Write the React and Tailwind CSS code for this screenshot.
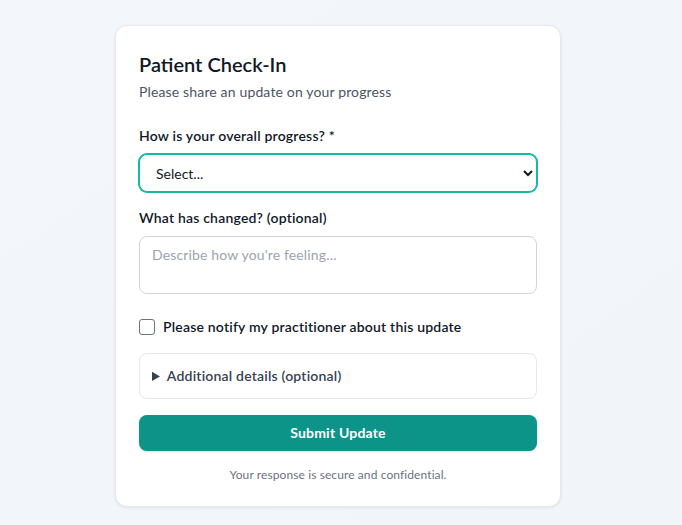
import React from "react";

export default function App() {
  return (
    <div
      className="min-h-[525px] w-full bg-gradient-to-br from-[#f3f6fa] to-[#f1f5f9] flex justify-center pt-[25px] pr-[6px]"
      style={{ fontFamily: 'Lato, "Noto Sans", sans-serif' }}
    >
      <div className="w-[446px] h-[482px] bg-white rounded-xl border border-gray-200 shadow-[0_1px_3px_rgba(0,0,0,0.08)] p-[23px] flex flex-col">
        <h1 className="text-xl leading-7 font-semibold text-[#111827] pt-px">Patient Check-In</h1>
        <p className="mt-1 text-sm leading-5 text-[#4b5563] tracking-[0.15px]">Please share an update on your progress</p>

        <label className="mt-6 text-sm leading-5 font-semibold text-[#111827] tracking-[0.2px]">How is your overall progress? *</label>
        <select className="mt-2 w-full h-[38px] pl-3 pr-4 text-sm text-[#111827] bg-white border border-[#14b8a6] ring-1 ring-[#14b8a6] rounded-lg outline-none">
          <option>Select...</option>
        </select>

        <label className="mt-4 text-sm leading-5 font-semibold text-[#111827] tracking-[0.2px]">What has changed? (optional)</label>
        <textarea
          rows={2}
          placeholder="Describe how you're feeling..."
          className="mt-2 w-full h-[58px] px-3 py-2 text-sm leading-5 tracking-[0.15px] border border-[#cbd5e1] rounded-lg resize-none placeholder:text-[#9ca3af] outline-none"
        />

        <label className="mt-[23px] flex items-center gap-2 h-5">
          <span className="w-4 h-4 rounded-[3px] border border-[#6b7280] bg-white" />
          <span className="text-sm leading-5 font-semibold text-[#111827] tracking-[0.2px]">Please notify my practitioner about this update</span>
        </label>

        <details className="mt-4 border border-[#e5e7eb] rounded-lg px-3 py-3">
          <summary className="text-sm leading-5 font-semibold text-[#374151] cursor-pointer tracking-[0.2px]">Additional details (optional)</summary>
        </details>

        <button className="mt-4 h-9 w-full rounded-lg bg-[#0d9488] text-white text-sm font-bold shadow-sm tracking-[0.2px]">Submit Update</button>

        <p className="mt-4 text-xs leading-4 text-center text-[#6b7280] tracking-[0.1px]">Your response is secure and confidential.</p>
      </div>
    </div>
  );
}
